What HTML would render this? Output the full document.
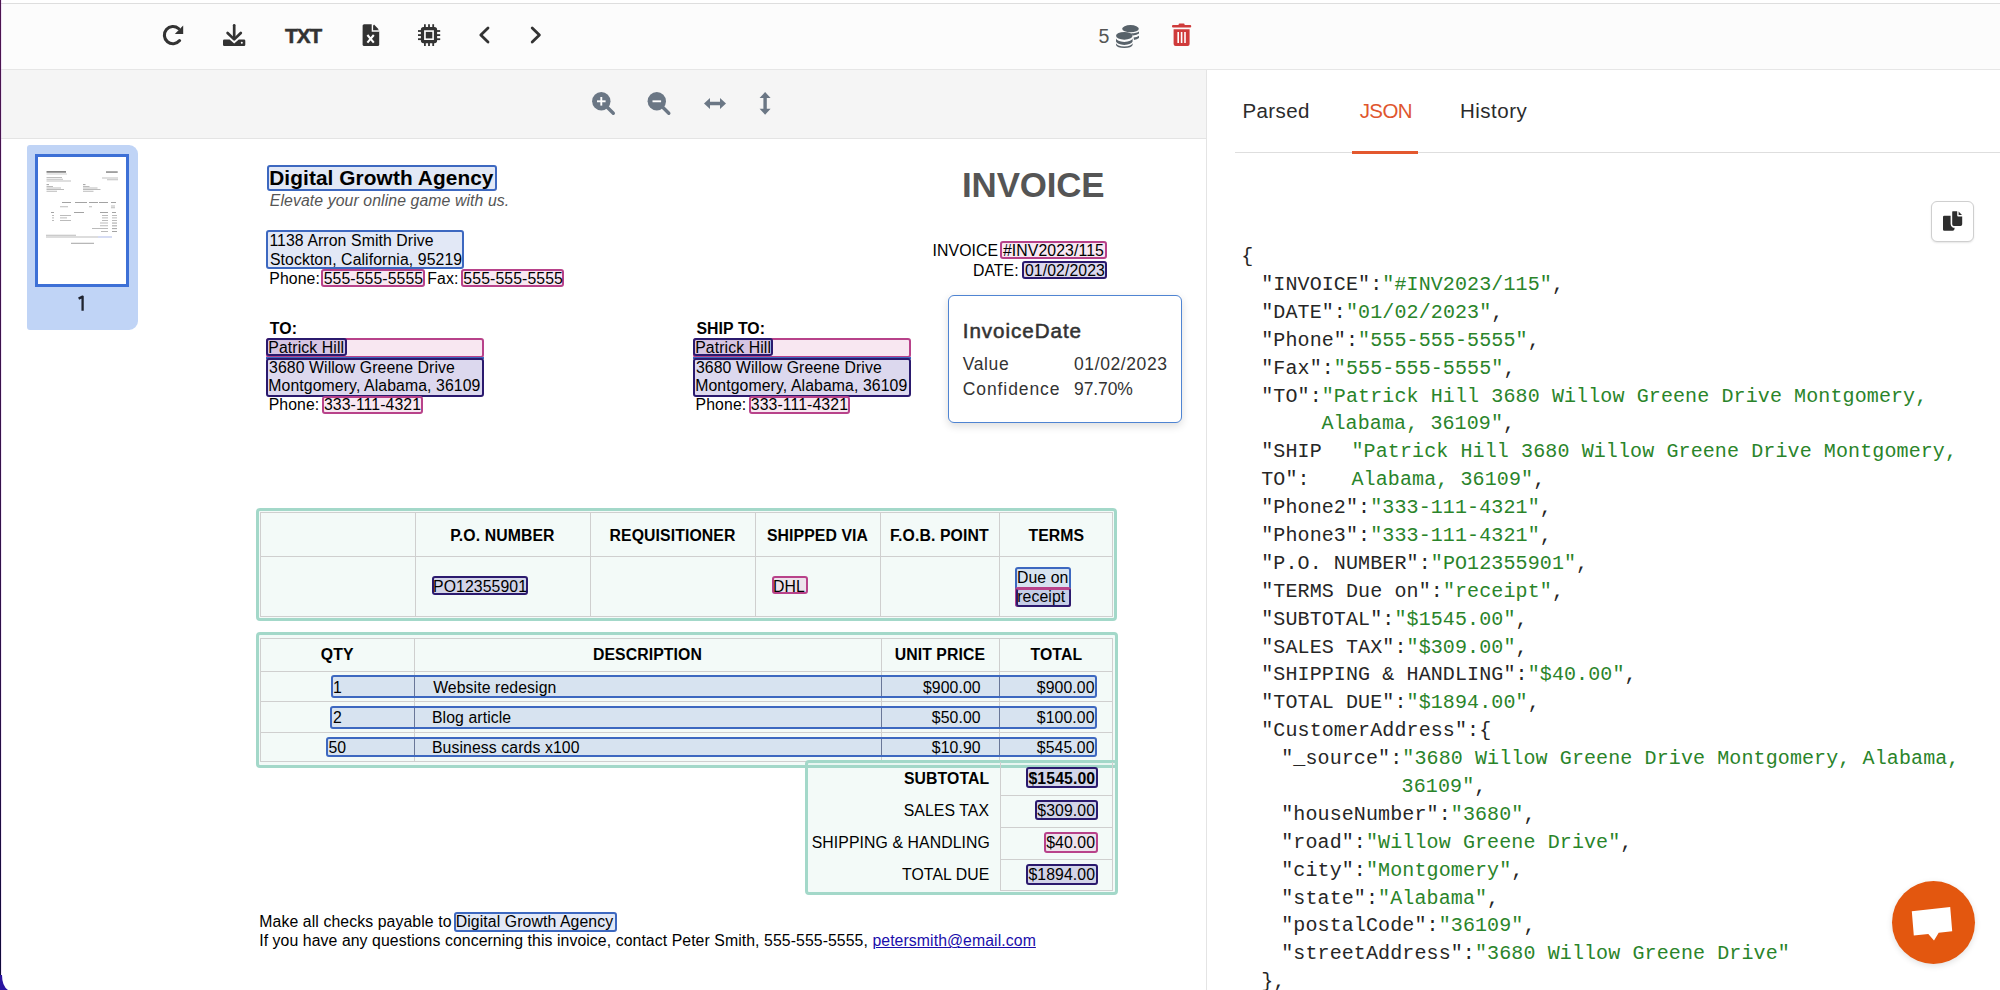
<!DOCTYPE html>
<html><head><meta charset="utf-8">
<style>
html,body{margin:0;padding:0;}
body{width:2000px;height:990px;position:relative;overflow:hidden;background:#fff;font-family:"Liberation Sans",sans-serif;color:#000;}
.t{position:absolute;white-space:nowrap;line-height:1;}
.r{position:absolute;box-sizing:border-box;}
.j{position:absolute;white-space:pre;font-family:"Liberation Mono",monospace;font-size:20px;line-height:1;letter-spacing:0.11px;}
svg{position:absolute;overflow:visible;}
</style></head><body>
<!-- top strip -->
<div class="r" style="left:0;top:0;width:2000px;height:3px;background:#fff"></div>
<div class="r" style="left:0;top:3px;width:2000px;height:1px;background:#dedede"></div>
<div class="r" style="left:0;top:4px;width:2000px;height:65px;background:#fcfcfc"></div>
<div class="r" style="left:0;top:69px;width:2000px;height:1px;background:#e6e6e6"></div>
<!-- left toolbar2 -->
<div class="r" style="left:0;top:70px;width:1206px;height:68px;background:#f5f5f5"></div>
<div class="r" style="left:0;top:138px;width:1206px;height:1px;background:#e4e4e4"></div>
<div class="r" style="left:1206px;top:70px;width:1px;height:920px;background:#e4e4e4"></div>

<!-- toolbar icons -->
<svg style="left:0;top:0" width="2000" height="70" viewBox="0 0 2000 70">
  <!-- refresh -->
  <path d="M178.6 28.6 A8.6 8.6 0 1 0 179.6 40.6" fill="none" stroke="#333" stroke-width="3.1" stroke-linecap="round"/>
  <polygon points="183.2,25.6 183.2,34 174.8,34" fill="#333"/>
  <!-- download -->
  <line x1="234.2" y1="25.3" x2="234.2" y2="38" stroke="#333" stroke-width="2.7" stroke-linecap="round"/>
  <polyline points="227.6,33 234.2,39.4 240.8,33" fill="none" stroke="#333" stroke-width="2.7" stroke-linecap="round" stroke-linejoin="round"/>
  <path d="M224.3 39.4 H229.6 L234.2 43.6 L238.8 39.4 H244 Q245.3 39.4 245.3 40.7 V44.7 Q245.3 46 244 46 H224.3 Q223 46 223 44.7 V40.7 Q223 39.4 224.3 39.4 Z" fill="#333"/>
  <circle cx="241.8" cy="42.8" r="1" fill="#fff"/>
  <!-- TXT -->
  <text x="285" y="43.3" font-family="Liberation Sans" font-weight="700" font-size="20.8" fill="#333" stroke="#333" stroke-width="0.5" letter-spacing="-1">TXT</text>
  <!-- file excel -->
  <path d="M364.2 24.2 H372.6 L379.2 30.8 V44.4 Q379.2 46 377.6 46 H364.2 Q362.6 46 362.6 44.4 V25.8 Q362.6 24.2 364.2 24.2 Z" fill="#333"/>
  <path d="M372.4 24 L372.4 31 L379.4 31" fill="none" stroke="#fcfcfc" stroke-width="1.4"/>
  <polygon points="374,24.6 378.8,29.5 374,29.5" fill="#333"/>
  <path d="M367.4 35 L373.8 42.6 M373.8 35 L367.4 42.6" stroke="#fff" stroke-width="2.1"/>
  <!-- microchip -->
  <rect x="422.5" y="28.6" width="13" height="13" fill="none" stroke="#333" stroke-width="3.2" rx="1"/>
  <rect x="425.8" y="31.9" width="6.5" height="6.5" fill="#333"/>
  <g stroke="#333" stroke-width="1.8">
    <line x1="424.9" y1="24.2" x2="424.9" y2="28"/><line x1="429" y1="24.2" x2="429" y2="28"/><line x1="433.2" y1="24.2" x2="433.2" y2="28"/>
    <line x1="424.9" y1="42" x2="424.9" y2="46"/><line x1="429" y1="42" x2="429" y2="46"/><line x1="433.2" y1="42" x2="433.2" y2="46"/>
    <line x1="418" y1="31" x2="421.8" y2="31"/><line x1="418" y1="35.1" x2="421.8" y2="35.1"/><line x1="418" y1="39.2" x2="421.8" y2="39.2"/>
    <line x1="436.4" y1="31" x2="440.2" y2="31"/><line x1="436.4" y1="35.1" x2="440.2" y2="35.1"/><line x1="436.4" y1="39.2" x2="440.2" y2="39.2"/>
  </g>
  <!-- chevrons -->
  <polyline points="488,28 480.8,35 488,42" fill="none" stroke="#333" stroke-width="2.8" stroke-linecap="round" stroke-linejoin="round"/>
  <polyline points="532.2,28 539.4,35 532.2,42" fill="none" stroke="#333" stroke-width="2.8" stroke-linecap="round" stroke-linejoin="round"/>
  <!-- 5 -->
  <text x="1098.6" y="42.6" font-family="Liberation Sans" font-size="19.6" fill="#555">5</text>
  <!-- coins -->
  <g fill="#58626a">
    <ellipse cx="1130.5" cy="28.7" rx="8.3" ry="3.6"/>
    <path d="M1131 33.3 Q1137 33 1139 31.4 V33.6 Q1137 35.3 1133 35.6 Z"/>
    <path d="M1133.6 37.6 Q1137 37.2 1139 35.8 V38 Q1137 39.7 1134 40 Z"/>
    <ellipse cx="1124.3" cy="35.8" rx="8.3" ry="3.9"/>
    <path d="M1116 38.6 Q1117 41.6 1124.3 41.9 Q1131.6 41.6 1132.6 38.6 V41.6 Q1131.6 44.6 1124.3 44.9 Q1117 44.6 1116 41.6 Z"/>
    <path d="M1116 43.2 Q1117 46.2 1124.3 46.5 Q1131.6 46.2 1132.6 43.2 V45 Q1131.6 47.8 1124.3 48 Q1117 47.8 1116 45 Z"/>
  </g>
  <!-- trash -->
  <g fill="#cf3b3b">
    <rect x="1172" y="25" width="19.2" height="2.6" rx="1"/>
    <rect x="1178.6" y="23.6" width="6" height="2.4" rx="1"/>
    <path d="M1173.6 29.2 H1189.6 V44 Q1189.6 46 1187.6 46 H1175.6 Q1173.6 46 1173.6 44 Z"/>
  </g>
  <g fill="#fff">
    <rect x="1177.4" y="32" width="1.6" height="11"/>
    <rect x="1180.8" y="32" width="1.6" height="11"/>
    <rect x="1184.2" y="32" width="1.6" height="11"/>
  </g>
  <!-- zoom in -->
</svg>
<svg style="left:0;top:70px" width="1206" height="68" viewBox="0 70 1206 68">
  <g fill="#6b7785" stroke="none">
    <circle cx="601.3" cy="101.3" r="9.2"/>
    <circle cx="656.8" cy="101.3" r="9.2"/>
  </g>
  <g stroke="#6b7785" stroke-width="3.4" stroke-linecap="round">
    <line x1="607" y1="107" x2="613.3" y2="113.2"/>
    <line x1="662.5" y1="107" x2="668.8" y2="113.2"/>
  </g>
  <g stroke="#fff" stroke-width="1.9">
    <line x1="597" y1="101.3" x2="605.6" y2="101.3"/><line x1="601.3" y1="97" x2="601.3" y2="105.6"/>
    <line x1="652.5" y1="101.3" x2="661.1" y2="101.3"/>
  </g>
  <g fill="#6b7785">
    <path d="M704 103.5 L710 98 V101.8 H720 V98 L726 103.5 L720 109 V105.2 H710 V109 Z"/>
    <path d="M765.1 92 L770.6 98 H766.8 V108.7 H770.6 L765.1 114.7 L759.6 108.7 H763.4 V98 H759.6 Z"/>
  </g>
</svg>

<!-- left purple edge -->
<div class="r" style="left:0;top:0;width:1.35px;height:990px;background:linear-gradient(#4e1450,#2a0f48 70%,#0c0838)"></div>
<div class="r" style="left:1.35px;top:0;width:1px;height:990px;background:rgba(210,170,230,0.3)"></div>
<svg style="left:0;top:975px" width="12" height="15" viewBox="0 0 12 15"><path d="M0 0 L2 0 Q2 11 8 15 L0 15 Z" fill="#2a14a0"/></svg>

<!-- thumbnail -->
<div class="r" style="left:27px;top:145px;width:111px;height:185px;background:#c0d4f6;border-radius:3px 9px 9px 3px"></div>
<div class="r" style="left:35px;top:153.7px;width:94px;height:133px;background:#fff;border:3px solid #3d70d6"></div>
<svg style="left:0;top:0" width="150" height="300" viewBox="0 0 150 300"><rect x="46.5" y="171.2" width="19.5" height="1.4" fill="#666"/><rect x="46.5" y="173.6" width="20.5" height="0.8" fill="#c4c4c4"/><rect x="46.5" y="177" width="15.5" height="0.8" fill="#b0b0b0"/><rect x="46.5" y="178.8" width="16.5" height="0.8" fill="#b0b0b0"/><rect x="46.5" y="180.6" width="24.5" height="0.8" fill="#b0b0b0"/><rect x="106" y="171.4" width="11.700000000000003" height="1.3" fill="#777"/><rect x="102" y="177.6" width="16" height="0.8" fill="#b0b0b0"/><rect x="107" y="179.4" width="11" height="0.8" fill="#b0b0b0"/><rect x="46.5" y="184.3" width="2.5" height="0.8" fill="#888"/><rect x="46.5" y="186" width="6.5" height="0.8" fill="#aaa"/><rect x="46.5" y="187.6" width="14.5" height="0.8" fill="#aaa"/><rect x="46.5" y="189.2" width="17.5" height="0.8" fill="#aaa"/><rect x="46.5" y="190.8" width="10.5" height="0.8" fill="#aaa"/><rect x="83.0" y="184.3" width="2.5" height="0.8" fill="#888"/><rect x="83.0" y="186" width="6.5" height="0.8" fill="#aaa"/><rect x="83.0" y="187.6" width="14.5" height="0.8" fill="#aaa"/><rect x="83.0" y="189.2" width="17.5" height="0.8" fill="#aaa"/><rect x="83.0" y="190.8" width="10.5" height="0.8" fill="#aaa"/><rect x="62" y="202" width="9" height="0.9" fill="#999"/><rect x="75" y="202" width="12" height="0.9" fill="#999"/><rect x="89" y="202" width="9" height="0.9" fill="#999"/><rect x="99" y="202" width="9" height="0.9" fill="#999"/><rect x="111" y="202" width="5" height="0.9" fill="#999"/><rect x="60" y="206.4" width="8" height="0.8" fill="#aaa"/><rect x="89" y="206.4" width="3" height="0.8" fill="#aaa"/><rect x="111" y="205.6" width="4" height="0.8" fill="#aaa"/><rect x="111" y="207.4" width="4" height="0.8" fill="#aaa"/><rect x="51" y="212" width="3" height="0.9" fill="#999"/><rect x="74" y="212" width="10" height="0.9" fill="#999"/><rect x="100" y="212" width="8" height="0.9" fill="#999"/><rect x="112" y="212" width="4" height="0.9" fill="#999"/><rect x="52" y="215" width="2" height="0.8" fill="#aaa"/><rect x="60" y="215" width="11" height="0.8" fill="#aaa"/><rect x="102" y="215" width="6" height="0.8" fill="#aaa"/><rect x="112" y="215" width="5" height="0.8" fill="#aaa"/><rect x="52" y="217.5" width="2" height="0.8" fill="#aaa"/><rect x="60" y="217.5" width="7" height="0.8" fill="#aaa"/><rect x="102" y="217.5" width="6" height="0.8" fill="#aaa"/><rect x="112" y="217.5" width="5" height="0.8" fill="#aaa"/><rect x="52" y="220" width="2" height="0.8" fill="#aaa"/><rect x="60" y="220" width="11" height="0.8" fill="#aaa"/><rect x="102" y="220" width="6" height="0.8" fill="#aaa"/><rect x="112" y="220" width="5" height="0.8" fill="#aaa"/><rect x="100" y="222.6" width="8" height="0.8" fill="#aaa"/><rect x="112" y="222.6" width="5" height="0.9" fill="#999"/><rect x="100" y="225.4" width="8" height="0.8" fill="#aaa"/><rect x="112" y="225.4" width="5" height="0.9" fill="#999"/><rect x="92" y="228.2" width="16" height="0.8" fill="#aaa"/><rect x="112" y="228.2" width="5" height="0.9" fill="#999"/><rect x="101" y="231" width="7" height="0.8" fill="#aaa"/><rect x="112" y="231" width="5" height="0.9" fill="#999"/><rect x="46" y="234.8" width="30" height="0.8" fill="#aaa"/><rect x="46" y="236.6" width="52" height="0.8" fill="#aaa"/><rect x="98" y="236.6" width="14" height="0.8" fill="#9aa8e0"/><rect x="71" y="242.8" width="23" height="0.9" fill="#999"/></svg>
<svg style="left:0;top:0" width="150" height="330" viewBox="0 0 150 330"><path d="M78.6 298.6 L82.6 296.6 V310.8" fill="none" stroke="#1f2430" stroke-width="2.3" stroke-linejoin="round"/></svg>

<!-- document -->
<div class="r" style="left:267.00px;top:165.30px;width:230.00px;height:26.20px;border:2px solid #3d68c0;background:rgba(61,104,192,0.15);border-radius:3px;"></div>
<div class="t" style="top:168.02px;font-size:20.8px;left:269.21px;font-weight:700;letter-spacing:0.1px;">Digital Growth Agency</div>
<div class="t" style="top:193.47px;font-size:15.8px;left:269.81px;font-style:italic;color:#555;letter-spacing:0.1px;">Elevate your online game with us.</div>
<div class="r" style="left:266.20px;top:230.00px;width:197.60px;height:39.00px;border:2px solid #3d68c0;background:rgba(61,104,192,0.15);border-radius:3px;"></div>
<div class="t" style="top:233.27px;font-size:15.8px;left:269.40px;letter-spacing:0.1px;">1138 Arron Smith Drive</div>
<div class="t" style="top:251.67px;font-size:15.8px;left:269.88px;letter-spacing:0.1px;">Stockton, California, 95219</div>
<div class="t" style="top:271.27px;font-size:15.8px;left:269.30px;letter-spacing:0.1px;">Phone:</div>
<div class="r" style="left:321.00px;top:268.60px;width:104.20px;height:18.00px;border:2px solid #b8428a;background:rgba(200,70,150,0.13);border-radius:3px;"></div>
<div class="t" style="top:271.27px;font-size:15.8px;left:323.67px;letter-spacing:0.1px;">555-555-5555</div>
<div class="t" style="top:271.27px;font-size:15.8px;left:427.30px;letter-spacing:0.1px;">Fax:</div>
<div class="r" style="left:460.70px;top:269.00px;width:103.60px;height:17.50px;border:2px solid #b8428a;background:rgba(200,70,150,0.13);border-radius:3px;"></div>
<div class="t" style="top:271.27px;font-size:15.8px;left:463.37px;letter-spacing:0.1px;">555-555-5555</div>
<div class="t" style="top:168.14px;font-size:34.9px;left:962.07px;font-weight:700;color:#555;letter-spacing:-0.15px;">INVOICE</div>
<div class="t" style="top:243.47px;font-size:15.8px;left:932.54px;letter-spacing:0.1px;">INVOICE</div>
<div class="r" style="left:1000.00px;top:241.00px;width:107.30px;height:18.00px;border:2px solid #b8428a;background:rgba(200,70,150,0.13);border-radius:3px;"></div>
<div class="t" style="top:243.47px;font-size:15.8px;left:1002.93px;letter-spacing:0.1px;">#INV2023/115</div>
<div class="t" style="top:263.27px;font-size:15.8px;left:972.90px;letter-spacing:0.1px;">DATE:</div>
<div class="r" style="left:1022.40px;top:260.60px;width:84.90px;height:18.20px;border:2px solid #2b1a6e;background:rgba(80,60,170,0.2);border-radius:3px;"></div>
<div class="t" style="top:263.27px;font-size:15.8px;left:1024.88px;letter-spacing:0.1px;">01/02/2023</div>
<div class="t" style="top:321.07px;font-size:15.8px;left:269.82px;font-weight:700;letter-spacing:0.1px;">TO:</div>
<div class="r" style="left:266.40px;top:338.00px;width:218.00px;height:19.50px;border:2px solid #b8428a;background:rgba(200,70,150,0.13);border-radius:3px;"></div>
<div class="r" style="left:266.40px;top:338.00px;width:80.60px;height:17.60px;border:2px solid #2b1a6e;background:rgba(80,60,170,0.2);border-radius:3px;"></div>
<div class="r" style="left:266.40px;top:356.50px;width:218.00px;height:2.00px;background:#3d68c0;"></div>
<div class="r" style="left:266.40px;top:357.50px;width:218.00px;height:39.50px;border:2px solid #2b1a6e;background:rgba(80,60,170,0.2);border-radius:3px;"></div>
<div class="t" style="top:340.47px;font-size:15.8px;left:268.30px;letter-spacing:0.1px;">Patrick Hill</div>
<div class="t" style="top:359.87px;font-size:15.8px;left:269.00px;letter-spacing:0.1px;">3680 Willow Greene Drive</div>
<div class="t" style="top:378.47px;font-size:15.8px;left:268.30px;letter-spacing:0.1px;">Montgomery, Alabama, 36109</div>
<div class="t" style="top:397.47px;font-size:15.8px;left:268.70px;letter-spacing:0.1px;">Phone:</div>
<div class="r" style="left:321.60px;top:396.00px;width:101.40px;height:17.60px;border:2px solid #b8428a;background:rgba(200,70,150,0.13);border-radius:3px;"></div>
<div class="t" style="top:397.47px;font-size:15.8px;left:323.90px;letter-spacing:0.1px;">333-111-4321</div>
<div class="t" style="top:321.07px;font-size:15.8px;left:696.44px;font-weight:700;letter-spacing:0.1px;">SHIP TO:</div>
<div class="r" style="left:693.30px;top:338.00px;width:218.00px;height:19.50px;border:2px solid #b8428a;background:rgba(200,70,150,0.13);border-radius:3px;"></div>
<div class="r" style="left:693.30px;top:338.00px;width:80.00px;height:17.60px;border:2px solid #2b1a6e;background:rgba(80,60,170,0.2);border-radius:3px;"></div>
<div class="r" style="left:693.30px;top:356.50px;width:218.00px;height:2.00px;background:#3d68c0;"></div>
<div class="r" style="left:693.30px;top:357.50px;width:218.00px;height:39.50px;border:2px solid #2b1a6e;background:rgba(80,60,170,0.2);border-radius:3px;"></div>
<div class="t" style="top:340.47px;font-size:15.8px;left:695.20px;letter-spacing:0.1px;">Patrick Hill</div>
<div class="t" style="top:359.87px;font-size:15.8px;left:695.90px;letter-spacing:0.1px;">3680 Willow Greene Drive</div>
<div class="t" style="top:378.47px;font-size:15.8px;left:695.20px;letter-spacing:0.1px;">Montgomery, Alabama, 36109</div>
<div class="t" style="top:397.47px;font-size:15.8px;left:695.60px;letter-spacing:0.1px;">Phone:</div>
<div class="r" style="left:748.50px;top:396.00px;width:101.40px;height:17.60px;border:2px solid #b8428a;background:rgba(200,70,150,0.13);border-radius:3px;"></div>
<div class="t" style="top:397.47px;font-size:15.8px;left:750.80px;letter-spacing:0.1px;">333-111-4321</div>
<div class="r" style="left:255.60px;top:507.60px;width:861.90px;height:113.60px;border:3px solid #a3d8c9;background:rgba(160,214,200,0.12);border-radius:4px;"></div>
<div class="r" style="left:260.2px;top:512.2px;width:853.3px;height:105.2px;border:1px solid #cfcfcf;"></div>
<div class="r" style="left:260.20px;top:556.00px;width:853.30px;height:1.00px;background:#cfcfcf;"></div>
<div class="r" style="left:415.30px;top:512.20px;width:1.00px;height:105.20px;background:#cfcfcf;"></div>
<div class="r" style="left:589.60px;top:512.20px;width:1.00px;height:105.20px;background:#cfcfcf;"></div>
<div class="r" style="left:755.40px;top:512.20px;width:1.00px;height:105.20px;background:#cfcfcf;"></div>
<div class="r" style="left:879.60px;top:512.20px;width:1.00px;height:105.20px;background:#cfcfcf;"></div>
<div class="r" style="left:999.20px;top:512.20px;width:1.00px;height:105.20px;background:#cfcfcf;"></div>
<div class="t" style="top:527.97px;font-size:15.8px;left:202.45px;width:600px;text-align:center;font-weight:700;letter-spacing:0.1px;">P.O. NUMBER</div>
<div class="t" style="top:527.97px;font-size:15.8px;left:372.50px;width:600px;text-align:center;font-weight:700;letter-spacing:0.1px;">REQUISITIONER</div>
<div class="t" style="top:527.97px;font-size:15.8px;left:517.50px;width:600px;text-align:center;font-weight:700;letter-spacing:0.1px;">SHIPPED VIA</div>
<div class="t" style="top:527.97px;font-size:15.8px;left:639.40px;width:600px;text-align:center;font-weight:700;letter-spacing:0.1px;">F.O.B. POINT</div>
<div class="t" style="top:527.97px;font-size:15.8px;left:756.35px;width:600px;text-align:center;font-weight:700;letter-spacing:0.1px;">TERMS</div>
<div class="r" style="left:431.60px;top:576.00px;width:96.40px;height:19.00px;border:2px solid #2b1a6e;background:rgba(80,60,170,0.2);border-radius:3px;"></div>
<div class="t" style="top:579.47px;font-size:15.8px;left:433.00px;letter-spacing:0.1px;">PO12355901</div>
<div class="r" style="left:771.50px;top:576.00px;width:36.80px;height:18.40px;border:2px solid #b8428a;background:rgba(200,70,150,0.13);border-radius:3px;"></div>
<div class="t" style="top:579.47px;font-size:15.8px;left:772.90px;letter-spacing:0.1px;">DHL</div>
<div class="r" style="left:1015.30px;top:567.40px;width:56.10px;height:39.80px;border:2px solid #3d68c0;background:rgba(61,104,192,0.15);border-radius:3px;"></div>
<div class="r" style="left:1015.30px;top:586.50px;width:56.10px;height:20.70px;border:2px solid #b8428a;border-radius:3px;"></div>
<div class="r" style="left:1016.00px;top:587.50px;width:54.60px;height:19.70px;border:2px solid #2b1a6e;background:rgba(80,60,170,0.12);border-radius:3px;border-top-color:#b8428a"></div>
<div class="t" style="top:569.87px;font-size:15.8px;left:1016.90px;letter-spacing:0.1px;">Due on</div>
<div class="t" style="top:588.77px;font-size:15.8px;left:1017.15px;letter-spacing:0.1px;">receipt</div>
<div class="r" style="left:255.60px;top:632.20px;width:862.40px;height:136.20px;border:3px solid #a3d8c9;background:rgba(160,214,200,0.12);border-radius:4px;"></div>
<div class="r" style="left:260.2px;top:638.3px;width:853.3px;height:124px;border:1px solid #cfcfcf;"></div>
<div class="r" style="left:260.20px;top:670.50px;width:853.30px;height:1.00px;background:#cfcfcf;"></div>
<div class="r" style="left:260.20px;top:701.40px;width:853.30px;height:1.00px;background:#cfcfcf;"></div>
<div class="r" style="left:260.20px;top:732.00px;width:853.30px;height:1.00px;background:#cfcfcf;"></div>
<div class="r" style="left:414.30px;top:638.30px;width:1.00px;height:124.00px;background:#cfcfcf;"></div>
<div class="r" style="left:880.60px;top:638.30px;width:1.00px;height:124.00px;background:#cfcfcf;"></div>
<div class="r" style="left:999.20px;top:638.30px;width:1.00px;height:124.00px;background:#cfcfcf;"></div>
<div class="t" style="top:647.47px;font-size:15.8px;left:37.25px;width:600px;text-align:center;font-weight:700;letter-spacing:0.1px;">QTY</div>
<div class="t" style="top:647.47px;font-size:15.8px;left:347.45px;width:600px;text-align:center;font-weight:700;letter-spacing:0.1px;">DESCRIPTION</div>
<div class="t" style="top:647.47px;font-size:15.8px;left:639.90px;width:600px;text-align:center;font-weight:700;letter-spacing:0.1px;">UNIT PRICE</div>
<div class="t" style="top:647.47px;font-size:15.8px;left:756.35px;width:600px;text-align:center;font-weight:700;letter-spacing:0.1px;">TOTAL</div>
<div class="r" style="left:330.80px;top:675.10px;width:766.60px;height:23.00px;border:2px solid #3d68c0;background:rgba(61,104,192,0.15);border-radius:3px;"></div>
<div class="r" style="left:414.30px;top:677.10px;width:1.00px;height:19.00px;background:rgba(40,60,110,0.55);"></div>
<div class="r" style="left:880.60px;top:677.10px;width:1.00px;height:19.00px;background:rgba(40,60,110,0.55);"></div>
<div class="r" style="left:999.20px;top:677.10px;width:1.00px;height:19.00px;background:rgba(40,60,110,0.55);"></div>
<div class="t" style="top:679.67px;font-size:15.8px;left:333.10px;letter-spacing:0.1px;">1</div>
<div class="t" style="top:679.67px;font-size:15.8px;left:433.13px;letter-spacing:0.1px;">Website redesign</div>
<div class="t" style="top:679.67px;font-size:15.8px;right:1019.28px;letter-spacing:0.1px;">$900.00</div>
<div class="t" style="top:679.67px;font-size:15.8px;right:905.38px;letter-spacing:0.1px;">$900.00</div>
<div class="r" style="left:330.20px;top:706.00px;width:767.20px;height:22.50px;border:2px solid #3d68c0;background:rgba(61,104,192,0.15);border-radius:3px;"></div>
<div class="r" style="left:414.30px;top:708.00px;width:1.00px;height:18.50px;background:rgba(40,60,110,0.55);"></div>
<div class="r" style="left:880.60px;top:708.00px;width:1.00px;height:18.50px;background:rgba(40,60,110,0.55);"></div>
<div class="r" style="left:999.20px;top:708.00px;width:1.00px;height:18.50px;background:rgba(40,60,110,0.55);"></div>
<div class="t" style="top:710.17px;font-size:15.8px;left:332.91px;letter-spacing:0.1px;">2</div>
<div class="t" style="top:710.17px;font-size:15.8px;left:431.90px;letter-spacing:0.1px;">Blog article</div>
<div class="t" style="top:710.17px;font-size:15.8px;right:1019.28px;letter-spacing:0.1px;">$50.00</div>
<div class="t" style="top:710.17px;font-size:15.8px;right:905.38px;letter-spacing:0.1px;">$100.00</div>
<div class="r" style="left:325.60px;top:736.50px;width:771.80px;height:20.70px;border:2px solid #3d68c0;background:rgba(61,104,192,0.15);border-radius:3px;"></div>
<div class="r" style="left:414.30px;top:738.50px;width:1.00px;height:16.70px;background:rgba(40,60,110,0.55);"></div>
<div class="r" style="left:880.60px;top:738.50px;width:1.00px;height:16.70px;background:rgba(40,60,110,0.55);"></div>
<div class="r" style="left:999.20px;top:738.50px;width:1.00px;height:16.70px;background:rgba(40,60,110,0.55);"></div>
<div class="t" style="top:740.07px;font-size:15.8px;left:328.47px;letter-spacing:0.1px;">50</div>
<div class="t" style="top:740.07px;font-size:15.8px;left:431.90px;letter-spacing:0.1px;">Business cards x100</div>
<div class="t" style="top:740.07px;font-size:15.8px;right:1019.28px;letter-spacing:0.1px;">$10.90</div>
<div class="t" style="top:740.07px;font-size:15.8px;right:905.38px;letter-spacing:0.1px;">$545.00</div>
<div class="r" style="left:805.20px;top:759.60px;width:313.20px;height:135.60px;border:3px solid #a3d8c9;background:rgba(160,214,200,0.12);border-radius:4px;"></div>
<div class="r" style="left:999.6px;top:762px;width:113.7px;height:129.3px;border:1px solid #cfcfcf;border-top:none"></div>
<div class="r" style="left:999.60px;top:794.60px;width:113.70px;height:1.00px;background:#cfcfcf;"></div>
<div class="r" style="left:999.60px;top:827.00px;width:113.70px;height:1.00px;background:#cfcfcf;"></div>
<div class="r" style="left:999.60px;top:859.40px;width:113.70px;height:1.00px;background:#cfcfcf;"></div>
<div class="t" style="top:771.17px;font-size:15.8px;right:1010.71px;font-weight:700;letter-spacing:0.1px;">SUBTOTAL</div>
<div class="r" style="left:1025.70px;top:767.10px;width:72.00px;height:20.70px;border:2px solid #2b1a6e;background:rgba(80,60,170,0.2);border-radius:3px;"></div>
<div class="t" style="top:771.17px;font-size:15.8px;right:904.85px;font-weight:700;letter-spacing:0.1px;">$1545.00</div>
<div class="t" style="top:802.67px;font-size:15.8px;right:1010.87px;letter-spacing:0.1px;">SALES TAX</div>
<div class="r" style="left:1034.70px;top:799.50px;width:63.50px;height:20.70px;border:2px solid #2b1a6e;background:rgba(80,60,170,0.2);border-radius:3px;"></div>
<div class="t" style="top:802.67px;font-size:15.8px;right:904.88px;letter-spacing:0.1px;">$309.00</div>
<div class="t" style="top:835.07px;font-size:15.8px;right:1010.02px;letter-spacing:0.1px;">SHIPPING &amp; HANDLING</div>
<div class="r" style="left:1043.70px;top:831.90px;width:54.30px;height:20.70px;border:2px solid #b8428a;background:rgba(200,70,150,0.13);border-radius:3px;"></div>
<div class="t" style="top:835.07px;font-size:15.8px;right:904.88px;letter-spacing:0.1px;">$40.00</div>
<div class="t" style="top:867.47px;font-size:15.8px;right:1010.52px;letter-spacing:0.1px;">TOTAL DUE</div>
<div class="r" style="left:1026.20px;top:864.30px;width:71.80px;height:20.30px;border:2px solid #2b1a6e;background:rgba(80,60,170,0.2);border-radius:3px;"></div>
<div class="t" style="top:867.47px;font-size:15.8px;right:904.88px;letter-spacing:0.1px;">$1894.00</div>
<div class="t" style="top:913.97px;font-size:15.8px;left:259.30px;letter-spacing:0.1px;">Make all checks payable to</div>
<div class="r" style="left:454.10px;top:911.50px;width:163.40px;height:20.60px;border:2px solid #3d68c0;background:rgba(61,104,192,0.15);border-radius:3px;"></div>
<div class="t" style="top:913.97px;font-size:15.8px;left:455.70px;letter-spacing:0.1px;">Digital Growth Agency</div>
<div class="t" style="left:259.2px;top:933.47px;font-size:15.8px;letter-spacing:0.085px">If you have any questions concerning this invoice, contact Peter Smith, 555-555-5555, <span style="color:#1a0dab;text-decoration:underline">petersmith@email.com</span></div>

<!-- tooltip -->
<div class="r" style="left:947.7px;top:294.6px;width:234.3px;height:128.4px;background:#fff;border:1.6px solid #4f84d2;border-radius:6px;box-shadow:0 3px 8px rgba(0,0,0,0.14)"></div>
<div class="t" style="left:962.8px;top:320.6px;font-size:20.6px;color:#333;letter-spacing:0.95px;-webkit-text-stroke:0.55px #333">InvoiceDate</div>
<div class="t" style="left:962.8px;top:356.3px;font-size:17.5px;color:#333;letter-spacing:0.6px">Value</div>
<div class="t" style="left:962.8px;top:381.4px;font-size:17.5px;color:#333;letter-spacing:0.9px">Confidence</div>
<div class="t" style="left:1074px;top:356.3px;font-size:17.5px;color:#333;letter-spacing:0.6px">01/02/2023</div>
<div class="t" style="left:1074px;top:381.4px;font-size:17.5px;color:#333;letter-spacing:-0.1px">97.70%</div>

<!-- right panel tabs -->
<div class="t" style="left:1242.4px;top:100.7px;font-size:20.5px;color:#2b2b2b;letter-spacing:0.4px">Parsed</div>
<div class="t" style="left:1359.7px;top:100.7px;font-size:20.5px;color:#e0562e;letter-spacing:-0.6px">JSON</div>
<div class="t" style="left:1460px;top:100.7px;font-size:20.5px;color:#2b2b2b;letter-spacing:0.5px">History</div>
<div class="r" style="left:1235px;top:152px;width:765px;height:1px;background:#dedede"></div>
<div class="r" style="left:1351.8px;top:150.5px;width:66.2px;height:3px;background:#e3582e"></div>

<!-- copy button -->
<div class="r" style="left:1930.8px;top:201.2px;width:43.7px;height:41.2px;border:1.5px solid #cfcfcf;border-radius:6px;background:#fff;box-shadow:0 1px 2px rgba(0,0,0,0.1)"></div>
<svg style="left:0;top:0" width="2000" height="300" viewBox="0 0 2000 300">
  <path d="M1944.3 215.8 H1950.6 V224 Q1950.6 227 1953 227.8 H1954.6 Q1954.6 230.8 1952.6 230.8 H1944.3 Q1943 230.8 1943 229.5 V217.1 Q1943 215.8 1944.3 215.8 Z" fill="#2e2e2e"/>
  <path d="M1952.7 211.2 H1957.2 V215.6 Q1957.2 216.6 1958.2 216.6 H1962.2 V224.3 Q1962.2 226 1960.5 226 H1953.9 Q1952.2 226 1952.2 224.3 V212.2 Q1952.2 211.2 1952.7 211.2 Z" fill="#2e2e2e"/>
  <polygon points="1958.6,211.4 1962,214.9 1958.6,214.9" fill="#2e2e2e"/>
</svg>

<!-- json -->
<div class="j" style="left:1241.20px;top:247.11px"><span style="color:#262626">{</span></div>
<div class="j" style="left:1261.20px;top:275.00px"><span style="color:#262626">&quot;INVOICE&quot;:</span><span style="color:#2a842a">&quot;#INV2023/115&quot;</span><span style="color:#262626">,</span></div>
<div class="j" style="left:1261.20px;top:302.89px"><span style="color:#262626">&quot;DATE&quot;:</span><span style="color:#2a842a">&quot;01/02/2023&quot;</span><span style="color:#262626">,</span></div>
<div class="j" style="left:1261.20px;top:330.78px"><span style="color:#262626">&quot;Phone&quot;:</span><span style="color:#2a842a">&quot;555-555-5555&quot;</span><span style="color:#262626">,</span></div>
<div class="j" style="left:1261.20px;top:358.67px"><span style="color:#262626">&quot;Fax&quot;:</span><span style="color:#2a842a">&quot;555-555-5555&quot;</span><span style="color:#262626">,</span></div>
<div class="j" style="left:1261.20px;top:386.56px"><span style="color:#262626">&quot;TO&quot;:</span><span style="color:#2a842a">&quot;Patrick Hill 3680 Willow Greene Drive Montgomery,</span></div>
<div class="j" style="left:1321.40px;top:414.45px"><span style="color:#2a842a">Alabama, 36109&quot;</span><span style="color:#262626">,</span></div>
<div class="j" style="left:1261.20px;top:442.34px"><span style="color:#262626">&quot;SHIP</span></div>
<div class="j" style="left:1261.20px;top:470.23px"><span style="color:#262626">TO&quot;:</span></div>
<div class="j" style="left:1351.50px;top:442.34px"><span style="color:#2a842a">&quot;Patrick Hill 3680 Willow Greene Drive Montgomery,</span></div>
<div class="j" style="left:1351.50px;top:470.23px"><span style="color:#2a842a">Alabama, 36109&quot;</span><span style="color:#262626">,</span></div>
<div class="j" style="left:1261.20px;top:498.12px"><span style="color:#262626">&quot;Phone2&quot;:</span><span style="color:#2a842a">&quot;333-111-4321&quot;</span><span style="color:#262626">,</span></div>
<div class="j" style="left:1261.20px;top:526.01px"><span style="color:#262626">&quot;Phone3&quot;:</span><span style="color:#2a842a">&quot;333-111-4321&quot;</span><span style="color:#262626">,</span></div>
<div class="j" style="left:1261.20px;top:553.90px"><span style="color:#262626">&quot;P.O. NUMBER&quot;:</span><span style="color:#2a842a">&quot;PO12355901&quot;</span><span style="color:#262626">,</span></div>
<div class="j" style="left:1261.20px;top:581.79px"><span style="color:#262626">&quot;TERMS Due on&quot;:</span><span style="color:#2a842a">&quot;receipt&quot;</span><span style="color:#262626">,</span></div>
<div class="j" style="left:1261.20px;top:609.68px"><span style="color:#262626">&quot;SUBTOTAL&quot;:</span><span style="color:#2a842a">&quot;$1545.00&quot;</span><span style="color:#262626">,</span></div>
<div class="j" style="left:1261.20px;top:637.57px"><span style="color:#262626">&quot;SALES TAX&quot;:</span><span style="color:#2a842a">&quot;$309.00&quot;</span><span style="color:#262626">,</span></div>
<div class="j" style="left:1261.20px;top:665.46px"><span style="color:#262626">&quot;SHIPPING &amp; HANDLING&quot;:</span><span style="color:#2a842a">&quot;$40.00&quot;</span><span style="color:#262626">,</span></div>
<div class="j" style="left:1261.20px;top:693.35px"><span style="color:#262626">&quot;TOTAL DUE&quot;:</span><span style="color:#2a842a">&quot;$1894.00&quot;</span><span style="color:#262626">,</span></div>
<div class="j" style="left:1261.20px;top:721.24px"><span style="color:#262626">&quot;CustomerAddress&quot;:{</span></div>
<div class="j" style="left:1281.20px;top:749.13px"><span style="color:#262626">&quot;_source&quot;:</span><span style="color:#2a842a">&quot;3680 Willow Greene Drive Montgomery, Alabama,</span></div>
<div class="j" style="left:1401.60px;top:777.02px"><span style="color:#2a842a">36109&quot;</span><span style="color:#262626">,</span></div>
<div class="j" style="left:1281.20px;top:804.91px"><span style="color:#262626">&quot;houseNumber&quot;:</span><span style="color:#2a842a">&quot;3680&quot;</span><span style="color:#262626">,</span></div>
<div class="j" style="left:1281.20px;top:832.80px"><span style="color:#262626">&quot;road&quot;:</span><span style="color:#2a842a">&quot;Willow Greene Drive&quot;</span><span style="color:#262626">,</span></div>
<div class="j" style="left:1281.20px;top:860.69px"><span style="color:#262626">&quot;city&quot;:</span><span style="color:#2a842a">&quot;Montgomery&quot;</span><span style="color:#262626">,</span></div>
<div class="j" style="left:1281.20px;top:888.58px"><span style="color:#262626">&quot;state&quot;:</span><span style="color:#2a842a">&quot;Alabama&quot;</span><span style="color:#262626">,</span></div>
<div class="j" style="left:1281.20px;top:916.47px"><span style="color:#262626">&quot;postalCode&quot;:</span><span style="color:#2a842a">&quot;36109&quot;</span><span style="color:#262626">,</span></div>
<div class="j" style="left:1281.20px;top:944.36px"><span style="color:#262626">&quot;streetAddress&quot;:</span><span style="color:#2a842a">&quot;3680 Willow Greene Drive&quot;</span></div>
<div class="j" style="left:1261.20px;top:972.25px"><span style="color:#262626">},</span></div>

<!-- chat button -->
<div class="r" style="left:1891.5px;top:881px;width:83.2px;height:83.2px;border-radius:50%;background:#e3570f;box-shadow:0 2px 6px rgba(0,0,0,0.12)"></div>
<svg style="left:0;top:0" width="2000" height="990" viewBox="0 0 2000 990">
  <path d="M1911.8 911.2 L1950.2 906.9 L1952.2 931.3 L1938.7 932.8 L1934 940.6 L1928.3 933.9 L1913.8 935.6 Z" fill="#fff"/>
</svg>
</body></html>
